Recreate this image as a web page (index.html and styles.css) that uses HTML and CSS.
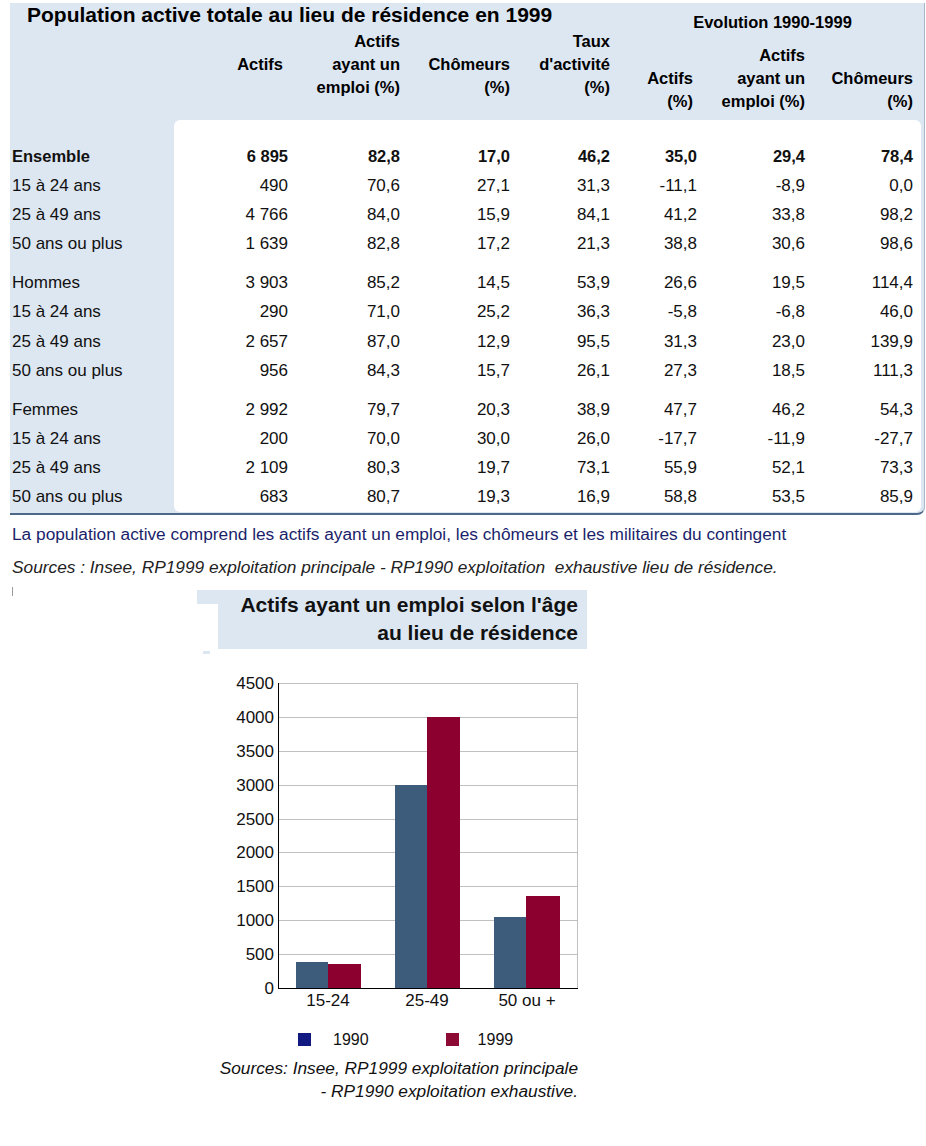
FILE: index.html
```html
<!DOCTYPE html>
<html lang="fr">
<head>
<meta charset="utf-8">
<title>Population active</title>
<link rel="stylesheet" href="styles.css">
</head>
<body>
<div class="tbl">
  <div class="thead">
    <div class="th-left">
      <div class="title">Population active totale au lieu de résidence en 1999</div>
      <div class="hcols hcols-left">
        <div class="hc-label"></div>
        <div class="hc c1 mid">Actifs</div>
        <div class="hc">Actifs<br>ayant un<br>emploi (%)</div>
        <div class="hc">Chômeurs<br>(%)</div>
        <div class="hc">Taux<br>d'activité<br>(%)</div>
      </div>
    </div>
    <div class="th-right">
      <div class="evo">Evolution 1990-1999</div>
      <div class="hcols hcols-right">
        <div class="hc c5">Actifs<br>(%)</div>
        <div class="hc">Actifs<br>ayant un<br>emploi (%)</div>
        <div class="hc">Chômeurs<br>(%)</div>
      </div>
    </div>
  </div>
  <div class="tbody">
    <div class="labels">
      <div class="grp">
        <div class="lab b">Ensemble</div>
        <div class="lab">15 à 24 ans</div>
        <div class="lab">25 à 49 ans</div>
        <div class="lab">50 ans ou plus</div>
      </div>
      <div class="grp">
        <div class="lab">Hommes</div>
        <div class="lab">15 à 24 ans</div>
        <div class="lab">25 à 49 ans</div>
        <div class="lab">50 ans ou plus</div>
      </div>
      <div class="grp">
        <div class="lab">Femmes</div>
        <div class="lab">15 à 24 ans</div>
        <div class="lab">25 à 49 ans</div>
        <div class="lab">50 ans ou plus</div>
      </div>
    </div>
    <div class="panel">
      <div class="grp">
        <div class="row b"><span>6 895</span><span>82,8</span><span>17,0</span><span>46,2</span><span>35,0</span><span>29,4</span><span>78,4</span></div>
        <div class="row"><span>490</span><span>70,6</span><span>27,1</span><span>31,3</span><span>-11,1</span><span>-8,9</span><span>0,0</span></div>
        <div class="row"><span>4 766</span><span>84,0</span><span>15,9</span><span>84,1</span><span>41,2</span><span>33,8</span><span>98,2</span></div>
        <div class="row"><span>1 639</span><span>82,8</span><span>17,2</span><span>21,3</span><span>38,8</span><span>30,6</span><span>98,6</span></div>
      </div>
      <div class="grp">
        <div class="row"><span>3 903</span><span>85,2</span><span>14,5</span><span>53,9</span><span>26,6</span><span>19,5</span><span>114,4</span></div>
        <div class="row"><span>290</span><span>71,0</span><span>25,2</span><span>36,3</span><span>-5,8</span><span>-6,8</span><span>46,0</span></div>
        <div class="row"><span>2 657</span><span>87,0</span><span>12,9</span><span>95,5</span><span>31,3</span><span>23,0</span><span>139,9</span></div>
        <div class="row"><span>956</span><span>84,3</span><span>15,7</span><span>26,1</span><span>27,3</span><span>18,5</span><span>111,3</span></div>
      </div>
      <div class="grp">
        <div class="row"><span>2 992</span><span>79,7</span><span>20,3</span><span>38,9</span><span>47,7</span><span>46,2</span><span>54,3</span></div>
        <div class="row"><span>200</span><span>70,0</span><span>30,0</span><span>26,0</span><span>-17,7</span><span>-11,9</span><span>-27,7</span></div>
        <div class="row"><span>2 109</span><span>80,3</span><span>19,7</span><span>73,1</span><span>55,9</span><span>52,1</span><span>73,3</span></div>
        <div class="row"><span>683</span><span>80,7</span><span>19,3</span><span>16,9</span><span>58,8</span><span>53,5</span><span>85,9</span></div>
      </div>
    </div>
  </div>
</div>

<p class="note">La population active comprend les actifs ayant un emploi, les chômeurs et les militaires du contingent</p>
<p class="src">Sources : Insee, RP1999 exploitation principale - RP1990 exploitation &nbsp;exhaustive lieu de résidence.</p>

<div class="chart-head">
  <div class="tick"></div>
  <div class="ctitle-col">
    <div class="ctitle">Actifs ayant un emploi selon l'âge<br>au lieu de résidence</div>
    <div class="bit"></div>
  </div>
</div>

<div class="chart">
  <svg class="plot" width="380" height="340" viewBox="0 0 380 340">
    <g stroke="#c0c0c0" stroke-width="1" shape-rendering="crispEdges">
      <line x1="68" y1="13.5" x2="367" y2="13.5"/>
      <line x1="68" y1="47.5" x2="367" y2="47.5"/>
      <line x1="68" y1="81.5" x2="367" y2="81.5"/>
      <line x1="68" y1="115.5" x2="367" y2="115.5"/>
      <line x1="68" y1="149.5" x2="367" y2="149.5"/>
      <line x1="68" y1="182.5" x2="367" y2="182.5"/>
      <line x1="68" y1="216.5" x2="367" y2="216.5"/>
      <line x1="68" y1="250.5" x2="367" y2="250.5"/>
      <line x1="68" y1="284.5" x2="367" y2="284.5"/>
      <line x1="367.5" y1="13" x2="367.5" y2="318"/>
    </g>
    <g shape-rendering="crispEdges">
      <rect x="86" y="292" width="32" height="26" fill="#3d5b7a"/>
      <rect x="118" y="294" width="33" height="24" fill="#8c0030"/>
      <rect x="185" y="115" width="32" height="203" fill="#3d5b7a"/>
      <rect x="217" y="47" width="33" height="271" fill="#8c0030"/>
      <rect x="284" y="247" width="32" height="71" fill="#3d5b7a"/>
      <rect x="316" y="226" width="34" height="92" fill="#8c0030"/>
    </g>
    <g stroke="#000" stroke-width="1" shape-rendering="crispEdges">
      <line x1="68.5" y1="13" x2="68.5" y2="318"/>
      <line x1="68" y1="318.5" x2="368" y2="318.5"/>
    </g>
    <g class="ylab" text-anchor="end">
      <text x="64" y="19">4500</text>
      <text x="64" y="53">4000</text>
      <text x="64" y="87">3500</text>
      <text x="64" y="121">3000</text>
      <text x="64" y="155">2500</text>
      <text x="64" y="188">2000</text>
      <text x="64" y="222">1500</text>
      <text x="64" y="256">1000</text>
      <text x="64" y="290">500</text>
      <text x="64" y="324">0</text>
    </g>
    <g class="xlab" text-anchor="middle">
      <text x="118" y="336">15-24</text>
      <text x="217" y="336">25-49</text>
      <text x="317" y="336">50 ou +</text>
    </g>
  </svg>
  <div class="legend">
    <span class="sq sq1"></span><span class="lt lt1">1990</span>
    <span class="sq sq2"></span><span class="lt lt2">1999</span>
  </div>
  <div class="csrc">Sources: Insee, RP1999 exploitation principale<br>- RP1990 exploitation exhaustive.</div>
</div>
</body>
</html>
```

FILE: styles.css
```css
* {
  box-sizing: border-box;
}

body {
  margin: 0;
  width: 926px;
  background: #ffffff;
  color: #111111;
  font-family: "Liberation Sans", Arial, sans-serif;
}

/* ---------- table ---------- */
.tbl {
  margin: 3px 0 0 10px;
  width: 915px;
  background: #dde7f2;
  border-bottom: 2px solid #4d6889;
  border-right: 1px solid #a8b7c9;
  border-bottom-right-radius: 8px;
  padding-bottom: 1px;
}

.thead {
  display: flex;
  height: 117px;
}

.th-left {
  width: 600px;
}

.title {
  font-weight: bold;
  font-size: 21px;
  line-height: 24px;
  padding-left: 17px;
  white-space: nowrap;
  color: #000;
}

.hcols {
  display: grid;
  height: 69px;
}

.hcols-left {
  grid-template-columns: 164px 114px 112px 110px 100px;
  margin-top: 3px;
}

.hc {
  font-weight: bold;
  font-size: 16.5px;
  line-height: 23px;
  text-align: right;
  align-self: end;
  white-space: nowrap;
  color: #000;
}

.hc.mid {
  align-self: center;
}

.c1 {
  padding-right: 5px;
}

.th-right {
  width: 314px;
  padding-top: 8px;
}

.evo {
  font-weight: bold;
  font-size: 16.5px;
  line-height: 23px;
  text-align: center;
  padding-left: 11px;
  color: #000;
}

.hcols-right {
  grid-template-columns: 87px 108px 108px;
  margin-top: 10px;
}

.c5 {
  padding-right: 4px;
}

.tbody {
  display: flex;
}

.labels {
  width: 164px;
  padding-top: 21.5px;
  padding-left: 2px;
}

.panel {
  width: 747px;
  background: #ffffff;
  border-radius: 6px;
  padding-top: 21.5px;
}

.grp + .grp {
  margin-top: 9.9px;
}

.lab {
  height: 29.2px;
  line-height: 29.2px;
  font-size: 17px;
  white-space: nowrap;
}

.row {
  display: grid;
  grid-template-columns: 114px 112px 110px 100px 87px 108px 108px;
  height: 29.2px;
  line-height: 29.2px;
  font-size: 17px;
  text-align: right;
  white-space: nowrap;
}

.b {
  font-weight: bold;
  font-size: 16.5px;
}

/* ---------- notes ---------- */
.note {
  margin: 9px 0 0 12px;
  font-size: 17.3px;
  line-height: 20px;
  color: #1b1f6b;
  white-space: nowrap;
}

.src {
  margin: 13px 0 0 12px;
  font-size: 17.3px;
  line-height: 20px;
  font-style: italic;
  color: #222222;
  white-space: nowrap;
}

/* ---------- chart ---------- */
.chart-head {
  display: flex;
  align-items: flex-start;
  margin-top: 10px;
}

.tick {
  width: 1px;
  height: 9px;
  margin-left: 12px;
  background: #9a9a9a;
}

.ctitle-col {
  margin-left: 184px;
}

.ctitle {
  margin-top: 3px;
  width: 390px;
  padding: 1px 9px 2px 0;
  background: linear-gradient(#ffffff, #ffffff) left bottom / 21px 45px no-repeat, #dde7f2;
  text-align: right;
  font-weight: bold;
  font-size: 21px;
  line-height: 28px;
  color: #111;
  white-space: nowrap;
}

.bit {
  width: 7px;
  height: 3px;
  margin: 2px 0 0 6px;
  background: #dde7f2;
}

.chart {
  margin: 16px 0 0 210px;
  width: 380px;
}

.plot {
  display: block;
}

.plot text {
  font-family: "Liberation Sans", Arial, sans-serif;
  font-size: 17px;
  fill: #111111;
}

.legend {
  display: flex;
  align-items: center;
  height: 19px;
  margin: 20px 0 0 88px;
  font-size: 16px;
  line-height: 19px;
}

.sq {
  width: 13px;
  height: 13px;
}

.sq1 {
  background: #121a82;
}

.sq2 {
  margin-left: 77px;
  background: #8c0a33;
}

.lt1 {
  margin-left: 22px;
}

.lt2 {
  margin-left: 19px;
}

.csrc {
  width: 368px;
  margin-top: 8px;
  text-align: right;
  font-style: italic;
  font-size: 17.3px;
  line-height: 23px;
  color: #111111;
  white-space: nowrap;
}
```
